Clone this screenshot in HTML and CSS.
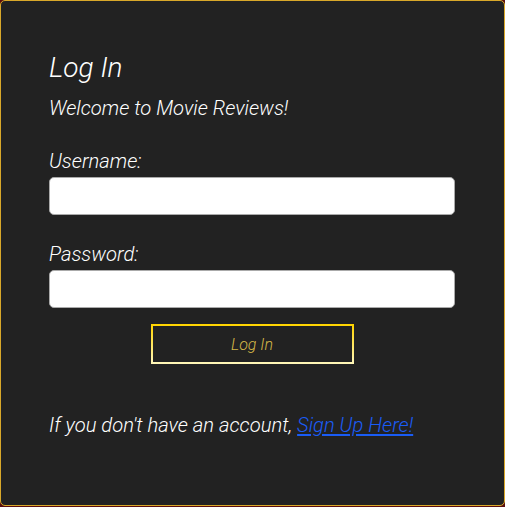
FILE: index.html
```html
<!DOCTYPE html>
<html lang="en">
<head>
<meta charset="utf-8">
<title>Log In</title>
<link rel="stylesheet" href="styles.css">
</head>
<body>
<main class="card">
  <h1 class="title">Log In</h1>
  <p class="welcome">Welcome to Movie Reviews!</p>
  <form class="form">
    <label class="label" for="username">Username:</label>
    <input class="field" id="username" type="text">
    <label class="label label-pw" for="password">Password:</label>
    <input class="field" id="password" type="password">
    <button class="btn" type="button">Log In</button>
  </form>
  <p class="footer">If you don't have an account, <a class="link" href="#">Sign Up Here!</a></p>
</main>
</body>
</html>
```
FILE: styles.css
```css
html, body {
  margin: 0;
  padding: 0;
}
body {
  background: #5a0e0e;
  font-family: Roboto, "Liberation Sans", sans-serif;
  font-weight: 300;
  font-style: italic;
  color: #fff;
}
.card {
  box-sizing: border-box;
  width: 505px;
  height: 506px;
  background: #222;
  border: 1px solid #d9a82a;
  border-radius: 5px;
  padding: 50px 49px 0 48px;
  display: flex;
  flex-direction: column;
}
.title {
  margin: 0;
  font-size: 28px;
  font-weight: 300;
  line-height: normal;
}
.welcome {
  margin: 12px 0 0;
  font-size: 20.2px;
  line-height: normal;
}
.form {
  display: flex;
  flex-direction: column;
  margin-top: 29px;
}
.label {
  font-size: 20.2px;
  line-height: normal;
}
.label-pw {
  margin-top: 27px;
}
.field {
  box-sizing: border-box;
  height: 38px;
  margin-top: 4px;
  width: 100%;
  border: 1px solid #aaa;
  border-radius: 5px;
  background: #fff;
  font: inherit;
  padding: 0 8px;
}
.btn {
  box-sizing: border-box;
  align-self: center;
  margin-top: 16px;
  width: 203px;
  height: 40px;
  background: #222;
  border: 2px solid;
  border-image: linear-gradient(#ffd400, #fff6b8) 1;
  color: #d4b848;
  font-family: Roboto, "Liberation Sans", sans-serif;
  font-style: italic;
  font-weight: 300;
  font-size: 16px;
  cursor: pointer;
}
.footer {
  margin: 49px 0 0;
  font-size: 20.2px;
  line-height: normal;
}
.link {
  color: #1a5cf5;
  text-decoration: underline;
}
```
